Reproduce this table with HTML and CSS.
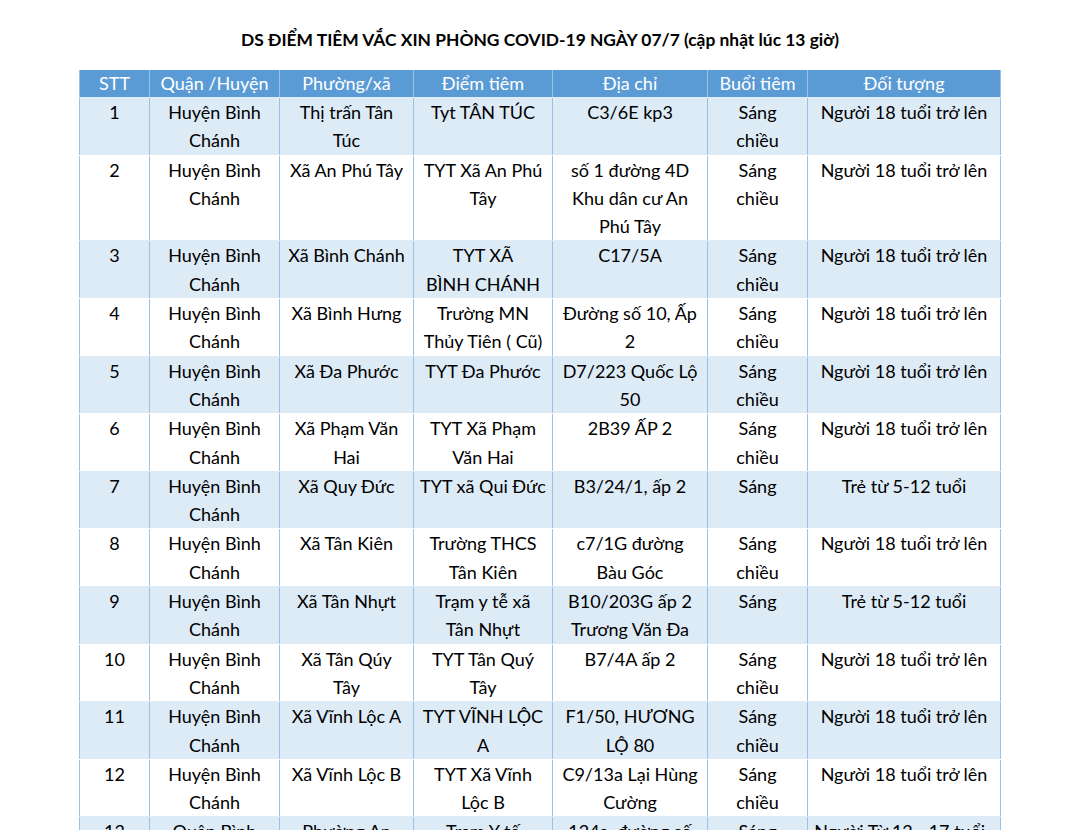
FILE: index.html
```html
<!DOCTYPE html>
<html lang="vi">
<head>
<meta charset="utf-8">
<link rel="stylesheet" href="styles.css">
</head>
<body>
<div class="page">
  <h1 class="title">DS ĐIỂM TIÊM VẮC XIN PHÒNG COVID-19 NGÀY 07/7 (cập nhật lúc 13 giờ)</h1>
  <table class="sched">
    <colgroup>
      <col class="c1"><col class="c2"><col class="c3"><col class="c4"><col class="c5"><col class="c6"><col class="c7">
    </colgroup>
    <thead>
      <tr><th>STT</th><th>Quận /Huyện</th><th>Phường/xã</th><th>Điểm tiêm</th><th>Địa chỉ</th><th>Buổi tiêm</th><th>Đối tượng</th></tr>
    </thead>
    <tbody>
      <tr><td>1</td><td>Huyện Bình<br>Chánh</td><td>Thị trấn Tân<br>Túc</td><td>Tyt TÂN TÚC</td><td>C3/6E kp3</td><td>Sáng<br>chiều</td><td>Người 18 tuổi trở lên</td></tr>
      <tr><td>2</td><td>Huyện Bình<br>Chánh</td><td>Xã An Phú Tây</td><td>TYT Xã An Phú<br>Tây</td><td>số 1 đường 4D<br>Khu dân cư An<br>Phú Tây</td><td>Sáng<br>chiều</td><td>Người 18 tuổi trở lên</td></tr>
      <tr><td>3</td><td>Huyện Bình<br>Chánh</td><td>Xã Bình Chánh</td><td>TYT XÃ<br>BÌNH CHÁNH</td><td>C17/5A</td><td>Sáng<br>chiều</td><td>Người 18 tuổi trở lên</td></tr>
      <tr><td>4</td><td>Huyện Bình<br>Chánh</td><td>Xã Bình Hưng</td><td>Trường MN<br>Thủy Tiên ( Cũ)</td><td>Đường số 10, Ấp<br>2</td><td>Sáng<br>chiều</td><td>Người 18 tuổi trở lên</td></tr>
      <tr><td>5</td><td>Huyện Bình<br>Chánh</td><td>Xã Đa Phước</td><td>TYT Đa Phước</td><td>D7/223 Quốc Lộ<br>50</td><td>Sáng<br>chiều</td><td>Người 18 tuổi trở lên</td></tr>
      <tr><td>6</td><td>Huyện Bình<br>Chánh</td><td>Xã Phạm Văn<br>Hai</td><td>TYT Xã Phạm<br>Văn Hai</td><td>2B39 ẤP 2</td><td>Sáng<br>chiều</td><td>Người 18 tuổi trở lên</td></tr>
      <tr><td>7</td><td>Huyện Bình<br>Chánh</td><td>Xã Quy Đức</td><td>TYT xã Qui Đức</td><td>B3/24/1, ấp 2</td><td>Sáng</td><td>Trẻ từ 5-12 tuổi</td></tr>
      <tr><td>8</td><td>Huyện Bình<br>Chánh</td><td>Xã Tân Kiên</td><td>Trường THCS<br>Tân Kiên</td><td>c7/1G đường<br>Bàu Góc</td><td>Sáng<br>chiều</td><td>Người 18 tuổi trở lên</td></tr>
      <tr><td>9</td><td>Huyện Bình<br>Chánh</td><td>Xã Tân Nhựt</td><td>Trạm y tễ xã<br>Tân Nhựt</td><td>B10/203G ấp 2<br>Trương Văn Đa</td><td>Sáng</td><td>Trẻ từ 5-12 tuổi</td></tr>
      <tr><td>10</td><td>Huyện Bình<br>Chánh</td><td>Xã Tân Qúy<br>Tây</td><td>TYT Tân Quý<br>Tây</td><td>B7/4A ấp 2</td><td>Sáng<br>chiều</td><td>Người 18 tuổi trở lên</td></tr>
      <tr><td>11</td><td>Huyện Bình<br>Chánh</td><td>Xã Vĩnh Lộc A</td><td>TYT VĨNH LỘC<br>A</td><td>F1/50, HƯƠNG<br>LỘ 80</td><td>Sáng<br>chiều</td><td>Người 18 tuổi trở lên</td></tr>
      <tr><td>12</td><td>Huyện Bình<br>Chánh</td><td>Xã Vĩnh Lộc B</td><td>TYT Xã Vĩnh<br>Lộc B</td><td>C9/13a Lại Hùng<br>Cường</td><td>Sáng<br>chiều</td><td>Người 18 tuổi trở lên</td></tr>
      <tr><td>13</td><td>Quận Bình<br>Tân</td><td>Phường An<br>Lạc</td><td>Trạm Y tế<br>phường An Lạc</td><td>124a, đường số<br>7</td><td>Sáng<br>chiều</td><td>Người Từ 12 - 17 tuổi ,</td></tr>
    </tbody>
  </table>
</div>
</body>
</html>
```

FILE: styles.css
```css
html, body {
  margin: 0;
  padding: 0;
  background: #ffffff;
}
.page {
  width: 1080px;
  height: 830px;
  overflow: hidden;
  font-family: "Lato", "Open Sans", sans-serif;
  color: #000;
}
.title {
  margin: 0 0 18px 0;
  padding-top: 28px;
  text-align: center;
  font-size: 17.4px;
  font-weight: 700;
  line-height: 24px;
}
.sched {
  margin: 0 auto;
  width: 921px;
  border-collapse: collapse;
  table-layout: fixed;
  font-size: 18px;
}
.c1 { width: 70px; }
.c2 { width: 130px; }
.c3 { width: 134px; }
.c4 { width: 139px; }
.c5 { width: 155px; }
.c6 { width: 100px; }
.c7 { width: 193px; }
.sched th {
  background: #5b9bd5;
  color: #ffffff;
  font-weight: 400;
  height: 27px;
  line-height: 27px;
  padding: 0;
  text-align: center;
  white-space: nowrap;
  border-left: 1px solid #9bc2e6;
  border-right: 1px solid #9bc2e6;
  border-bottom: 1px solid #e4eef8;
}
.sched td {
  vertical-align: top;
  text-align: center;
  padding: 0;
  white-space: nowrap;
  line-height: 28.3px;
  border-left: 1px solid #9bc2e6;
  border-right: 1px solid #9bc2e6;
  border-bottom: 1px solid #ffffff;
}
.sched tbody tr:nth-child(odd) td {
  background: #ddebf7;
}
.sched tbody tr:nth-child(even) td {
  background: #ffffff;
  border-bottom-color: #ddebf7;
}
```
